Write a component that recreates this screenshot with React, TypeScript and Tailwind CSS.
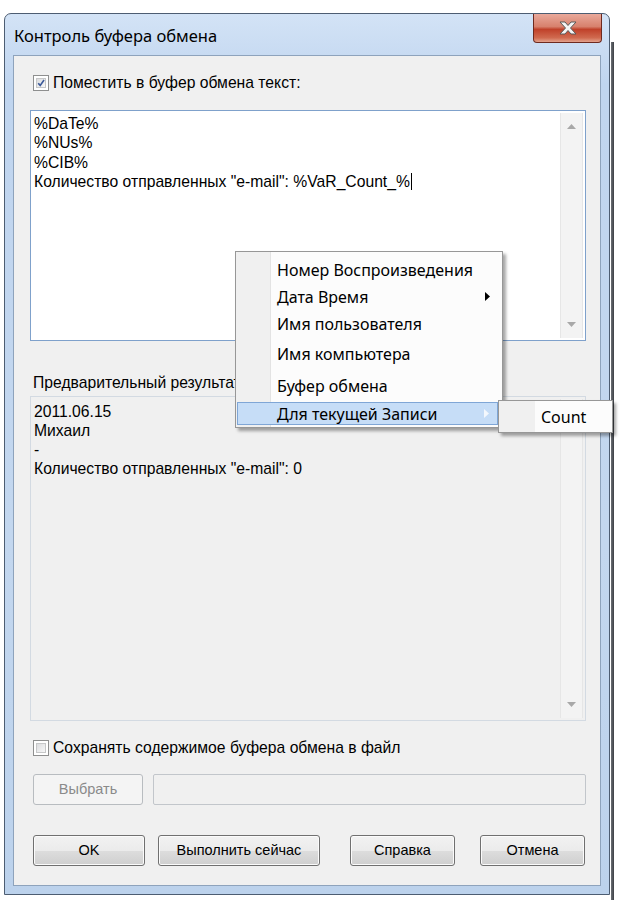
import React from "react";

const classic = "font-['Liberation_Sans',Arial,sans-serif]";
const ui = "font-['Noto_Sans','Liberation_Sans',sans-serif]";

function CheckBox({ checked }: { checked?: boolean }) {
  return (
    <span className="flex h-[16px] w-[16px] shrink-0 border border-[#8e8f8f] bg-white p-[2px]">
      <span className="flex h-full w-full items-center justify-center border border-[#c6c7c8] bg-gradient-to-br from-[#dcdddf] to-[#f7f7f7]">
        {checked && (
          <svg width="10" height="10" viewBox="0 0 10 10">
            <path d="M1.5 5.2 L4 8 L8.8 1.2" fill="none" stroke="#3c5a9a" strokeWidth="2" />
          </svg>
        )}
      </span>
    </span>
  );
}

function ScrollBar() {
  return (
    <div className="my-[2px] mr-[2px] flex w-[23px] flex-col items-center justify-between border-x border-[#e6e6e6] bg-[#f3f3f3] py-[11px]">
      <svg width="9" height="5" viewBox="0 0 9 5">
        <path d="M0 5 L4.5 0 L9 5 Z" fill="#a8a8a8" />
      </svg>
      <svg width="9" height="5" viewBox="0 0 9 5">
        <path d="M0 0 L4.5 5 L9 0 Z" fill="#a8a8a8" />
      </svg>
    </div>
  );
}

function WinButton({ w, children, disabled }: { w: string; children: React.ReactNode; disabled?: boolean }) {
  return disabled ? (
    <div className={`${w} flex h-[31px] items-center justify-center rounded-[3px] border border-[#b8bcc0] bg-[#f4f4f4] text-[14.5px] text-[#8a8a8a]`}>
      {children}
    </div>
  ) : (
    <div
      className={`${w} flex h-[31px] items-center justify-center rounded-[3px] border border-[#707070] bg-[linear-gradient(to_bottom,#f2f2f2_0%,#ebebeb_50%,#dddddd_51%,#cfcfcf_100%)] text-[14.5px] text-black shadow-[inset_0_0_0_1px_#fbfbfb]`}
    >
      {children}
    </div>
  );
}

export default function App() {
  const menuItems = [
    { label: "Номер Воспроизведения", h: "h-[27px]" },
    { label: "Дата Время", h: "h-[27px]", arrow: true },
    { label: "Имя пользователя", h: "h-[27px]" },
    { label: "Имя компьютера", h: "h-[33px]" },
    { label: "Буфер обмена", h: "h-[31px]" },
  ];

  return (
    <div className={`relative min-h-[900px] w-[629px] bg-white ${classic}`}>
      {/* window behind, peeking on the right */}
      <div className="absolute left-[611px] top-[42px] h-[858px] w-[3px] bg-[linear-gradient(to_right,#6b6f75,#3d4045)]" />

      <div className="pl-[4px] pt-[13px]">
        <div className="flex h-[882px] w-[606px] flex-col rounded-t-[7px] border border-[#4d5d72] bg-[linear-gradient(to_bottom,#d3e3f6_0%,#c0d5ef_8%,#c3d7ef_60%,#bcd2ec_100%)] px-[8px] pb-[8px]">
          {/* title bar */}
          <div className="flex h-[41px] items-start justify-between">
            <div className={`pl-[1px] pt-[10px] text-[16.5px] text-black ${ui}`}>Контроль буфера обмена</div>
            <div className="-mr-[1px] flex h-[29px] w-[69px] items-center justify-center rounded-b-[4px] border border-t-0 border-[#6e2a1f] bg-[linear-gradient(to_bottom,#e9a99b_0%,#d7816d_45%,#c0412a_55%,#d06a4f_85%,#e3a28d_100%)]">
              <svg width="22" height="16" viewBox="0 0 22 16">
                <path
                  d="M3 2 L8 2 L11 5.5 L14 2 L19 2 L13.5 8 L19 14 L14 14 L11 10.5 L8 14 L3 14 L8.5 8 Z"
                  fill="#f4f4f4"
                  stroke="#5a5a5a"
                  strokeWidth="1"
                />
              </svg>
            </div>
          </div>

          {/* client area */}
          <div className="flex flex-1 flex-col border border-[#8ea3bc] bg-[#f0f0f0] pl-[16px] pr-[14px] text-[15.7px]">
            <div className="ml-[3px] mt-[19px] flex h-[16px] items-center gap-[4px] text-black">
              <CheckBox checked />
              <span>Поместить в буфер обмена текст:</span>
            </div>

            <div className="mt-[19px] flex h-[231px] border border-[#7fa1cb] bg-white">
              <div className="flex-1 pl-[3px] pt-[3px] leading-[19.3px] text-black">
                <div>%DaTe%</div>
                <div>%NUs%</div>
                <div>%CIB%</div>
                <div>
                  Количество отправленных "e-mail": %VaR_Count_%
                  <span className="ml-[1px] inline-block h-[17px] w-[1px] bg-black align-[-3px]" />
                </div>
              </div>
              <ScrollBar />
            </div>

            <div className="mt-[30px] h-[18px] pl-[3px] text-black">Предварительный результат:</div>

            <div className="mt-[7px] flex h-[325px] border border-[#d3dae2] bg-[#f0f0f0]">
              <div className="flex-1 pl-[3px] pt-[5px] leading-[19px] text-black">
                <div>2011.06.15</div>
                <div>Михаил</div>
                <div>-</div>
                <div>Количество отправленных "e-mail": 0</div>
              </div>
              <ScrollBar />
            </div>

            <div className="ml-[3px] mt-[19px] flex h-[16px] items-center gap-[4px] text-black">
              <CheckBox />
              <span>Сохранять содержимое буфера обмена в файл</span>
            </div>

            <div className="ml-[3px] mt-[18px] flex h-[31px] gap-[10px]">
              <WinButton w="w-[110px]" disabled>
                Выбрать
              </WinButton>
              <div className="flex-1 rounded-[2px] border border-[#c2c6cb] bg-[#f0f0f0]" />
            </div>

            <div className="ml-[3px] mt-[30px] flex h-[31px]">
              <WinButton w="w-[112px]">OK</WinButton>
              <div className="ml-[13px]">
                <WinButton w="w-[162px]">Выполнить сейчас</WinButton>
              </div>
              <div className="ml-[30px]">
                <WinButton w="w-[105px]">Справка</WinButton>
              </div>
              <div className="ml-[25px]">
                <WinButton w="w-[105px]">Отмена</WinButton>
              </div>
            </div>
          </div>
        </div>
      </div>

      {/* context menu */}
      <div
        className={`absolute left-[235px] top-[251px] flex h-[177px] w-[268px] flex-col border border-[#979797] bg-[linear-gradient(to_right,#f0f0f0_0,#f0f0f0_34px,#e3e3e3_34px,#e3e3e3_35px,#fcfcfc_35px,#fcfcfc_100%)] pt-[4px] shadow-[3px_3px_3px_rgba(0,0,0,0.35)] ${ui}`}
      >
        {menuItems.map((it) => (
          <div key={it.label} className={`${it.h} flex items-center justify-between pl-[41px] pr-[12px] text-[16px] text-black`}>
            <span>{it.label}</span>
            {it.arrow && (
              <svg width="5" height="9" viewBox="0 0 5 9">
                <path d="M0 0 L5 4.5 L0 9 Z" fill="#000" />
              </svg>
            )}
          </div>
        ))}
        <div className="ml-[1px] mr-[4px] mt-[1px] flex h-[23px] items-center justify-between border border-[#7fa6d6] bg-[#c6ddf7] pl-[39px] pr-[8px] text-[16px] text-black">
          <span>Для текущей Записи</span>
          <svg width="5" height="9" viewBox="0 0 5 9">
            <path d="M0 0 L5 4.5 L0 9 Z" fill="#f4f8fd" />
          </svg>
        </div>
      </div>

      {/* submenu */}
      <div
        className={`absolute left-[498px] top-[400px] flex h-[33px] w-[115px] items-center border border-[#979797] bg-[linear-gradient(to_right,#f0f0f0_0,#f0f0f0_36px,#fcfcfc_36px,#fcfcfc_100%)] pl-[42px] text-[16px] text-black shadow-[3px_3px_3px_rgba(0,0,0,0.35)] ${ui}`}
      >
        Count
      </div>
    </div>
  );
}
